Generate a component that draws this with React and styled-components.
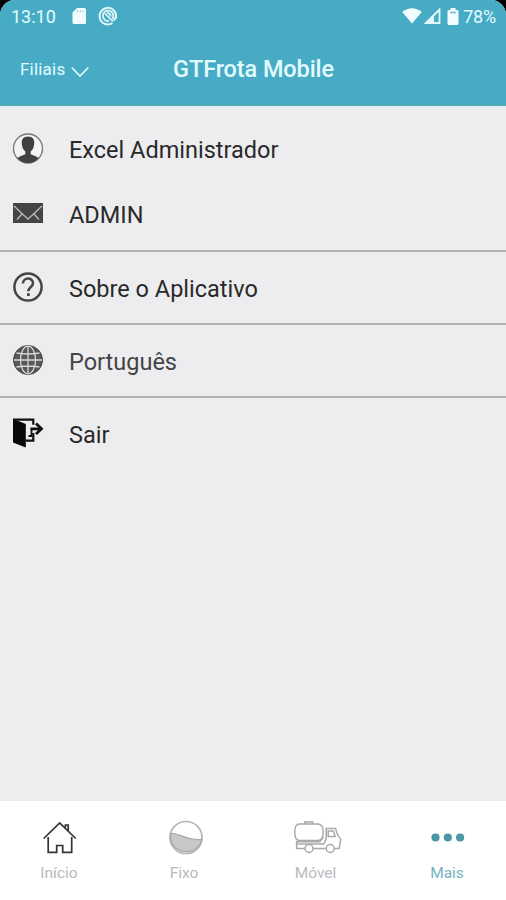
import React from "react";
import styled, { createGlobalStyle } from "styled-components";

const GlobalStyle = createGlobalStyle`
  * { box-sizing: border-box; }
  body { margin: 0; background: #000; font-family: Roboto, "Liberation Sans", sans-serif; }
  svg { display: block; flex: none; overflow: visible; }
`;

const Screen = styled.div`
  width: 506px;
  height: 900px;
  display: flex;
  flex-direction: column;
  overflow: hidden;
  background: #ededef;
  border-radius: 15px 15px 0 0;
`;

const Header = styled.header`
  height: 106px;
  flex: none;
  background: #48abc5;
  border-bottom: 2px solid #55a9b5;
  color: #e2fbff;
`;

const StatusBar = styled.div`
  height: 32px;
  display: flex;
  align-items: center;
  padding: 0 10px 0 11px;
  font-size: 18px;
`;

const Clock = styled.span`
  width: 61px;
`;

const StatusIcons = styled.div`
  display: flex;
  align-items: center;
  gap: ${(p) => p.$gap}px;
  margin-left: ${(p) => (p.$end ? "auto" : "0")};
`;

const Battery = styled.span`
  margin-left: 4px;
  letter-spacing: -0.2px;
`;

const TitleBar = styled.div`
  height: 72px;
  display: grid;
  grid-template-columns: 153px 201px 1fr;
  align-items: center;
`;

const BranchButton = styled.button`
  display: flex;
  align-items: center;
  gap: 6px;
  padding: 2px 0 0 20px;
  border: 0;
  background: none;
  color: inherit;
  font: 17px Roboto, sans-serif;
  letter-spacing: 0.2px;
  svg { margin-top: 6px; }
`;

const Title = styled.h1`
  margin: 0;
  padding-top: 1px;
  text-align: center;
  font-size: 23.5px;
  font-weight: 500;
  letter-spacing: -0.1px;
  white-space: nowrap;
`;

const Menu = styled.main`
  flex: 1;
  border-top: 1px solid #dff0f8;
  padding-top: 9px;
`;

const Group = styled.section`
  padding-bottom: ${(p) => p.$bottom || 0}px;
  border-bottom: ${(p) => (p.$last ? "0" : "2px solid #b0b0b1")};
`;

const Row = styled.div`
  height: ${(p) => p.$height}px;
  display: flex;
  align-items: center;
  padding-left: 13px;
  padding-bottom: 1px;
  gap: 26px;
`;

const RowLabel = styled.span`
  padding-top: 3px;
  font-size: 23.5px;
  line-height: 28px;
  color: ${(p) => p.$color || "#29292b"};
`;

const Nav = styled.nav`
  height: 99px;
  flex: none;
  display: grid;
  grid-template-columns: 118px 132px 131px 132px;
  background: #fff;
  padding-top: 18px;
`;

const Tab = styled.div`
  display: flex;
  flex-direction: column;
  align-items: center;
  gap: 6px;
  color: ${(p) => (p.$active ? "#77b2bd" : "#b7babd")};
  font-size: 15.5px;
  line-height: 20px;
`;

const SdCard = () => (
  <svg width="16" height="18" viewBox="0 0 16 18">
    <path d="M5 1H12.5Q14 1 14 2.5V15.5Q14 17 12.5 17H2Q.5 17 .5 15.5V5.5Z" fill="#f1fdff" />
    <path d="M5.5 3V5.5M8.3 3V5.5M11 3V5.5" stroke="#a9cdd6" strokeWidth="1" />
  </svg>
);

const Sync = () => (
  <svg width="20" height="20" viewBox="0 0 20 20" fill="none" stroke="#dff6fa">
    <path d="M14.5 17A8.3 8.3 0 1 1 18 11.5L15.5 14.5" strokeWidth="2" />
    <path d="M14.2 13A5.2 5.2 0 1 0 11 14.9" strokeWidth="1.8" />
    <path d="M7 7.5L15 15.5M9 6.8Q12.5 7.2 12.7 10.5" strokeWidth="1.7" />
  </svg>
);

const Wifi = () => (
  <svg width="20" height="16" viewBox="0 0 20 16" fill="#f2fdff">
    <path d="M.2 4Q10-3.5 19.8 4L10 15.5Z" />
  </svg>
);

const Signal = () => (
  <svg width="17" height="16" viewBox="0 0 17 16">
    <path d="M2 15L15.5 1.5V15Z" fill="none" stroke="#e2f7fa" strokeWidth="1.8" />
    <path d="M1 15.5L10 6.5V15.5Z" fill="#e2f7fa" />
  </svg>
);

const BatteryIcon = () => (
  <svg width="12" height="17" viewBox="0 0 12 17">
    <path d="M3.5 0H8.5V2H10Q11.5 2 11.5 3.5V15.5Q11.5 17 10 17H2Q.5 17 .5 15.5V3.5Q.5 2 2 2H3.5Z" fill="#f3fdff" />
    <path d="M3 4.5H9" stroke="#72b9c9" strokeWidth="1.5" />
  </svg>
);

const Chevron = () => (
  <svg width="18" height="12" viewBox="0 0 18 12" fill="none" stroke="#dff8fc" strokeWidth="1.7">
    <path d="M.8 1.5L9 10L17.3 1.5" />
  </svg>
);

const UserIcon = () => (
  <svg width="30" height="31" viewBox="0 0 30 31">
    <circle cx="15" cy="15.5" r="14.5" fill="#f3f3f3" stroke="#777" strokeWidth="1.3" />
    <path d="M4.3 25Q7.5 22.7 12.3 21.3V18.5Q9.3 16 8.8 11.5Q7.7 3.8 15 3.6Q22.3 3.8 21.2 11.5Q20.7 16 17.7 18.5V21.3Q22.5 22.7 25.7 25Q21.5 30 15 30Q8.5 30 4.3 25Z" fill="#414143" />
  </svg>
);

const MailIcon = () => (
  <svg width="30" height="20" viewBox="0 0 30 20">
    <path d="M0 0H30V20H0Z" fill="#444447" />
    <path d="M1 3L10 11.5L15 16L20 11.5L29 3M4 16.5L9.5 10.5M26 16.5L20.5 10.5" fill="none" stroke="#b8b8ba" strokeWidth="1.4" />
  </svg>
);

const HelpIcon = () => (
  <svg width="30" height="30" viewBox="0 0 30 30" fill="none" stroke="#454547">
    <circle cx="15" cy="15" r="13.6" strokeWidth="2.5" />
    <path d="M10 11.5C10 5 20 5 20 11.3C20 15 15.4 15 15.4 19.3" strokeWidth="2.5" />
    <path d="M15.4 21.2V24" strokeWidth="2.8" />
  </svg>
);

const GlobeIcon = () => (
  <svg width="30" height="30" viewBox="0 0 30 30">
    <circle cx="15" cy="15" r="14.5" fill="#58585b" stroke="#48484b" />
    <g fill="none" stroke="#d8d8da" strokeWidth="1.3">
      <ellipse cx="15" cy="15" rx="7.5" ry="13.8" />
      <path d="M15 1V29M1 15H29M3.5 8Q15 10 26.5 8M3.5 22Q15 20 26.5 22" />
    </g>
  </svg>
);

const ExitIcon = () => (
  <svg width="30" height="30" viewBox="0 0 30 30">
    <path d="M0 .8L12.8 6V29.5L0 24.5Z" fill="#080808" />
    <g fill="none" stroke="#111">
      <path d="M0 1.6H20.3V6.8M20.3 15V22.7H12.5" strokeWidth="2.2" />
      <path d="M17.5 10.8H27.5M23 5.5L28.5 10.8L23 16" strokeWidth="2.8" />
      <path d="M18.5 10.8V18H15.5" strokeWidth="1.8" />
    </g>
  </svg>
);

const HomeIcon = () => (
  <svg width="34" height="38" viewBox="-0.7 0 34 38" fill="none" stroke="#343434" strokeWidth="1.7">
    <path d="M1 19.5L17 4L33 19.5M22.7 8.5V6H25.5V11.8M5.5 18V33.3H14V26.5H20V33.3H29V18" />
  </svg>
);

const TankIcon = () => (
  <svg width="36" height="38" viewBox="-4 0.5 36 38">
    <circle cx="16" cy="19" r="16" fill="#fff" stroke="#b4b4b4" strokeWidth="1.7" />
    <path d="M.7 15C10 14 15 22.5 31.8 21A16 16 0 0 1 .7 21Z" fill="#c8c8c8" stroke="#aaa" strokeWidth="1.3" />
  </svg>
);

const TruckIcon = () => (
  <svg width="46" height="38" viewBox="-1.7 0 46 38" fill="none" stroke="#a9a9a9" strokeWidth="1.5">
    <path d="M10 5V3H18V5M5 5H23C27 5 28.5 9 28.5 13S27 21.5 23 21.5H5C1 21.5 0 18 0 13S1 5 5 5Z" />
    <path d="M1 22.8H25L29 18M2 23V29.5H9.8M1 25H29L31.5 20V9.5H41Q42 16 46 20L44.5 29.5H40M30.8 29.5H18.8M33.5 12H38.5L40.5 17.5H33.5Z" />
    <circle cx="14.3" cy="29.5" r="4" />
    <circle cx="35.5" cy="29.5" r="4" />
  </svg>
);

const MoreIcon = () => (
  <svg width="34" height="38" viewBox="-0.5 0.5 34 38" fill="#4c97a7">
    <circle cx="5" cy="19" r="4.1" />
    <circle cx="17.3" cy="19" r="4.1" />
    <circle cx="29.6" cy="19" r="4.1" />
  </svg>
);

export default function App() {
  return (
    <>
      <GlobalStyle />
      <Screen>
        <Header>
          <StatusBar>
            <Clock>13:10</Clock>
            <StatusIcons $gap={10}><SdCard /><Sync /></StatusIcons>
            <StatusIcons $gap={2} $end>
              <Wifi /><Signal />
              <StatusIcons $gap={0}>
                <Battery><BatteryIcon /></Battery>
                <Battery>78%</Battery>
              </StatusIcons>
            </StatusIcons>
          </StatusBar>
          <TitleBar>
            <BranchButton>Filiais<Chevron /></BranchButton>
            <Title>GTFrota Mobile</Title>
          </TitleBar>
        </Header>
        <Menu>
          <Group $bottom={4}>
            <Row $height={65}><UserIcon /><RowLabel>Excel Administrador</RowLabel></Row>
            <Row $height={65}><MailIcon /><RowLabel>ADMIN</RowLabel></Row>
          </Group>
          <Group><Row $height={71}><HelpIcon /><RowLabel>Sobre o Aplicativo</RowLabel></Row></Group>
          <Group><Row $height={71}><GlobeIcon /><RowLabel $color="#444446">Português</RowLabel></Row></Group>
          <Group $last><Row $height={71}><ExitIcon /><RowLabel>Sair</RowLabel></Row></Group>
        </Menu>
        <Nav>
          <Tab><HomeIcon />Início</Tab>
          <Tab><TankIcon />Fixo</Tab>
          <Tab><TruckIcon />Móvel</Tab>
          <Tab $active><MoreIcon />Mais</Tab>
        </Nav>
      </Screen>
    </>
  );
}
